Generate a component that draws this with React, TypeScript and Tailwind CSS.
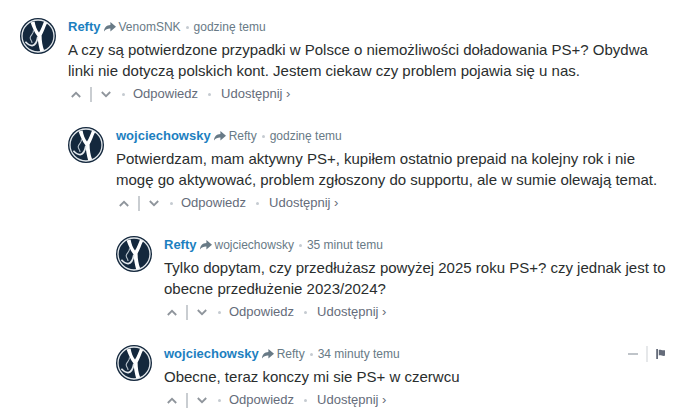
type Comment = {
  id: number;
  author: string;
  replyTo: string;
  time: string;
  text: string;
  indent: string;
  active?: boolean;
};

const comments: Comment[] = [
  {
    id: 1,
    author: "Refty",
    replyTo: "VenomSNK",
    time: "godzinę temu",
    text: "A czy są potwierdzone przypadki w Polsce o niemożliwości doładowania PS+? Obydwa linki nie dotyczą polskich kont. Jestem ciekaw czy problem pojawia się u nas.",
    indent: "",
  },
  {
    id: 2,
    author: "wojciechowsky",
    replyTo: "Refty",
    time: "godzinę temu",
    text: "Potwierdzam, mam aktywny PS+, kupiłem ostatnio prepaid na kolejny rok i nie mogę go aktywować, problem zgłoszony do supportu, ale w sumie olewają temat.",
    indent: "pl-12",
  },
  {
    id: 3,
    author: "Refty",
    replyTo: "wojciechowsky",
    time: "35 minut temu",
    text: "Tylko dopytam, czy przedłużasz powyżej 2025 roku PS+? czy jednak jest to obecne przedłużenie 2023/2024?",
    indent: "pl-24",
  },
  {
    id: 4,
    author: "wojciechowsky",
    replyTo: "Refty",
    time: "34 minuty temu",
    text: "Obecne, teraz konczy mi sie PS+ w czerwcu",
    indent: "pl-24",
    active: true,
  },
];

const Avatar = () => (
  <svg viewBox="0 0 36 36" className="size-9 shrink-0" aria-hidden="true">
    <circle cx="18" cy="18" r="18" fill="#14283d" />
    <circle cx="18" cy="18" r="16" fill="none" stroke="#e3e8ec" strokeWidth="1.3" />
    <path
      d="M10.6 4.6 L14.6 3.4 C15.4 8 16.8 11.6 19 14.4 C21.2 11.4 22.4 7.6 24 3.6 L27.2 5 C25 9 24 13.4 21.6 17.4 C21.6 22.6 22.4 27.6 24.2 32.6 L20.2 33.6 C18.8 28.6 18 23.4 17.4 18.2 C14.4 14.6 12.4 9.6 10.6 4.6 Z"
      fill="#fff"
    />
    <path
      d="M17.8 19 C17 23.6 15.4 27.2 12.2 27.6 C9.2 27.8 7.2 25.8 5.4 23.8"
      fill="none"
      stroke="#e3e8ec"
      strokeWidth="1.7"
    />
    <path
      d="M13.4 12.4 C14.2 15.4 10.6 17 10.2 19.6 C10 21.8 12 22.6 12 25"
      fill="none"
      stroke="#b9c4cd"
      strokeWidth="1.1"
    />
  </svg>
);

const ReplyArrow = () => (
  <svg viewBox="0 0 12 11" className="h-[11px] w-3 shrink-0" fill="#687a86" aria-hidden="true">
    <path d="M6.4 0 L12 4.8 L6.4 9.6 V6.6 C3.8 6.5 1.8 7.2 0 9.4 C0.3 5.6 2.5 3.2 6.4 3 Z" />
  </svg>
);

const Chevron = ({ down = false }: { down?: boolean }) => (
  <svg
    viewBox="0 0 10 7"
    className="h-[7px] w-2.5"
    fill="none"
    stroke="#8f959c"
    strokeWidth="1.8"
    aria-hidden="true"
  >
    <path d={down ? "M0.8 1 L5 5.2 L9.2 1" : "M0.8 6 L5 1.8 L9.2 6"} />
  </svg>
);

const Dot = () => <span className="block size-[3px] shrink-0 rounded-full bg-[#c5cbd1]" />;

const CommentItem = ({ comment }: { comment: Comment }) => (
  <li className={`flex gap-3 ${comment.indent}`}>
    <Avatar />
    <div className="min-w-0 flex-1">
      <div className="flex h-[18px] items-center text-xs text-[#687a86]">
        <a href="#profil" className="text-[13px] font-bold text-[#1c80c0]">
          {comment.author}
        </a>
        <span className="mx-[3px]">
          <ReplyArrow />
        </span>
        <a href="#odpowiedz" className="font-medium">
          {comment.replyTo}
        </a>
        <span className="mx-[5px]">
          <Dot />
        </span>
        <span>{comment.time}</span>
        {comment.active && (
          <div className="ml-auto flex items-center pr-[6px]">
            <button type="button" aria-label="Zwiń" className="flex h-4 items-center pr-2">
              <span className="h-0.5 w-2.5 bg-[#bfc4c9]" />
            </button>
            <span className="h-4 w-0.5 bg-[#e6e8ea]" />
            <button type="button" aria-label="Zgłoś" className="pl-2">
              <svg viewBox="0 0 10 10" className="size-2.5" fill="#656c7a" aria-hidden="true">
                <path d="M0.2 0 H2 V10 H0.2 Z M2.8 1 C4.5 0.2 5.5 1.8 9 1.2 V6.8 C6 7.4 5 5.8 2.8 6.6 Z" />
              </svg>
            </button>
          </div>
        )}
      </div>
      <p className="mt-[3px] text-[15px] leading-[21px] text-[#2a2e2e]">{comment.text}</p>
      <div className="mt-[3px] flex h-5 items-center text-[13px] font-medium text-[#656c7a]">
        <button type="button" aria-label="Głosuj w górę" className="px-[3px]">
          <Chevron />
        </button>
        <span className="mx-1.5 h-[15px] w-0.5 bg-[#c9cdd1]" />
        <button type="button" aria-label="Głosuj w dół" className="px-[3px]">
          <Chevron down />
        </button>
        <span className="mx-2">
          <Dot />
        </span>
        <button type="button">Odpowiedz</button>
        <span className="mx-2.5">
          <Dot />
        </span>
        <button type="button">Udostępnij ›</button>
      </div>
    </div>
  </li>
);

const App = () => {
  return (
    <main className="bg-white px-5 pt-[18px] font-['Liberation_Sans',Arial,sans-serif]">
      <ul className="flex flex-col gap-[23px]">
        {comments.map((comment) => (
          <CommentItem key={comment.id} comment={comment} />
        ))}
      </ul>
    </main>
  );
};

export default App;
